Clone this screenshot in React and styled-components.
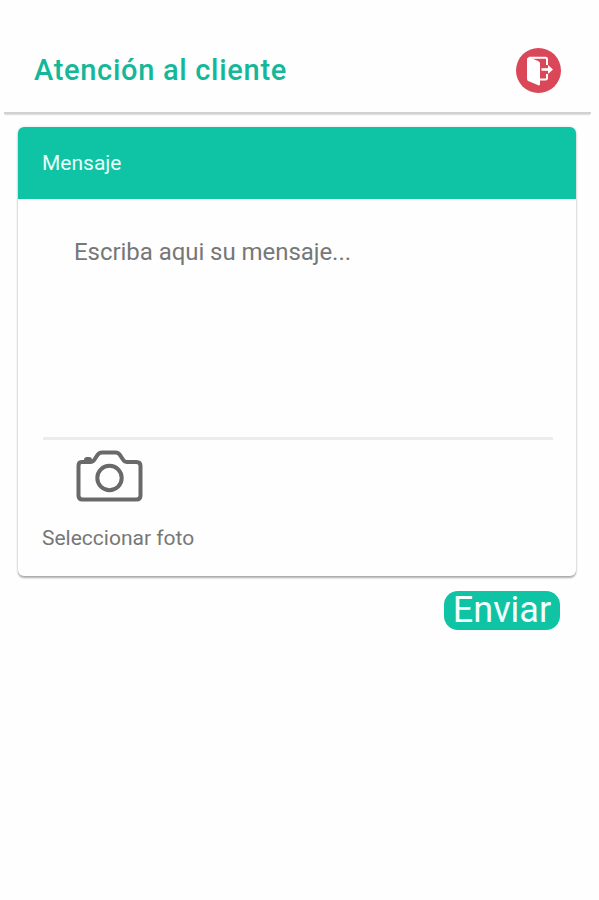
import React from "react";
import styled, { createGlobalStyle } from "styled-components";

const GlobalStyle = createGlobalStyle`
  body {
    margin: 0;
    background: #fefefe;
    font-family: Roboto, "Liberation Sans", sans-serif;
  }

  * {
    box-sizing: border-box;
  }
`;

const Page = styled.div`
  width: 599px;
  min-height: 900px;
`;

const Header = styled.header`
  display: flex;
  align-items: center;
  justify-content: space-between;
  height: 114px;
  margin: 0 8px 0 4px;
  padding: 28px 30px 0;
  border-bottom: 2px solid #d2d2d2;
  box-shadow: 0 2px 1px -1px rgba(0, 0, 0, 0.12);
`;

const Title = styled.h1`
  margin: 0;
  color: #14b898;
  font-size: 29px;
  font-weight: 500;
  line-height: 40px;
  letter-spacing: 0.7px;
`;

const ExitButton = styled.button`
  width: 45px;
  height: 45px;
  padding: 0;
  border: 0;
  border-radius: 50%;
  background: #da4759;

  svg {
    display: block;
  }
`;

const Card = styled.section`
  width: 558px;
  height: 449px;
  margin: 13px 0 0 18px;
  overflow: hidden;
  border-radius: 6px;
  background: #fefefe;
  box-shadow: 0 2px 2px rgba(0, 0, 0, 0.3), 0 0 3px rgba(0, 0, 0, 0.12);
`;

const CardHeader = styled.div`
  height: 72px;
  padding-left: 24px;
  background: #0fc3a5;
  color: #e9fffa;
  font-size: 21px;
  line-height: 73px;
`;

const CardBody = styled.div`
  padding: 0 23px 0 25px;
`;

const Message = styled.textarea`
  display: block;
  width: 100%;
  height: 241px;
  padding: 38px 31px;
  border: 0;
  border-bottom: 3px solid #ececec;
  outline: 0;
  resize: none;
  background: transparent;
  color: #777;
  font-family: inherit;
  font-size: 24px;
  line-height: 30px;
  letter-spacing: -0.05px;

  &::placeholder {
    color: #777;
    opacity: 1;
  }
`;

const PhotoPicker = styled.div`
  display: flex;
  flex-direction: column;
  align-items: flex-start;
  margin-left: -1px;
  color: #777;
  font-size: 21px;
  line-height: 28px;

  svg {
    margin: 10px 0 22px 34px;
  }
`;

const Actions = styled.div`
  display: flex;
  justify-content: flex-end;
  padding: 15px 39px 0 0;
`;

const SendButton = styled.button`
  width: 116px;
  height: 39px;
  padding: 0;
  border: 0;
  border-radius: 14px;
  background: #0fc3a5;
  color: #f4fffd;
  font-family: inherit;
  font-size: 36px;
  line-height: 39px;
`;

function ExitIcon() {
  return (
    <svg width="45" height="45" viewBox="0 0 45 45" fill="none">
      <path d="M11 10.5 13 9 22.5 13.2Q24 14 24 15.5V36Q24 38 22.3 37.3L12.2 33Q11 32.4 11 31Z" fill="#fff" />
      <path d="M13 9.8H29.5Q31 9.8 31 11.3V17M31 26V30Q31 31.5 29.5 31.5H24" stroke="#fff" strokeWidth="2" />
      <path d="M25.5 21.5H33" stroke="#fff" strokeWidth="2.6" />
      <path d="M32 17 37 21.5 32 26Z" fill="#fff" />
    </svg>
  );
}

function CameraIcon() {
  return (
    <svg width="67" height="52" viewBox="0 0 67 52" fill="none">
      <path
        d="M5.5 12H15Q17 12 18.2 10L21.7 4.7Q23.3 2.5 26 2.5H39.5Q42.2 2.5 43.7 4.7L47.3 10Q48.5 12 50.5 12H60.5Q64.5 12 64.5 16V45.5Q64.5 49.5 60.5 49.5H6.5Q2.5 49.5 2.5 45.5V16Q2.5 12 5.5 12Z"
        stroke="#696969"
        strokeWidth="4"
      />
      <path d="M8 12V10Q8 7 11 7H13Q16 7 16 10V12Z" fill="#696969" />
      <circle cx="33.5" cy="28" r="12.2" stroke="#696969" strokeWidth="4" />
    </svg>
  );
}

export default function App() {
  return (
    <>
      <GlobalStyle />
      <Page>
        <Header>
          <Title>Atención al cliente</Title>
          <ExitButton aria-label="Salir">
            <ExitIcon />
          </ExitButton>
        </Header>
        <Card>
          <CardHeader>Mensaje</CardHeader>
          <CardBody>
            <Message placeholder="Escriba aqui su mensaje..." />
            <PhotoPicker>
              <CameraIcon />
              Seleccionar foto
            </PhotoPicker>
          </CardBody>
        </Card>
        <Actions>
          <SendButton>Enviar</SendButton>
        </Actions>
      </Page>
    </>
  );
}
